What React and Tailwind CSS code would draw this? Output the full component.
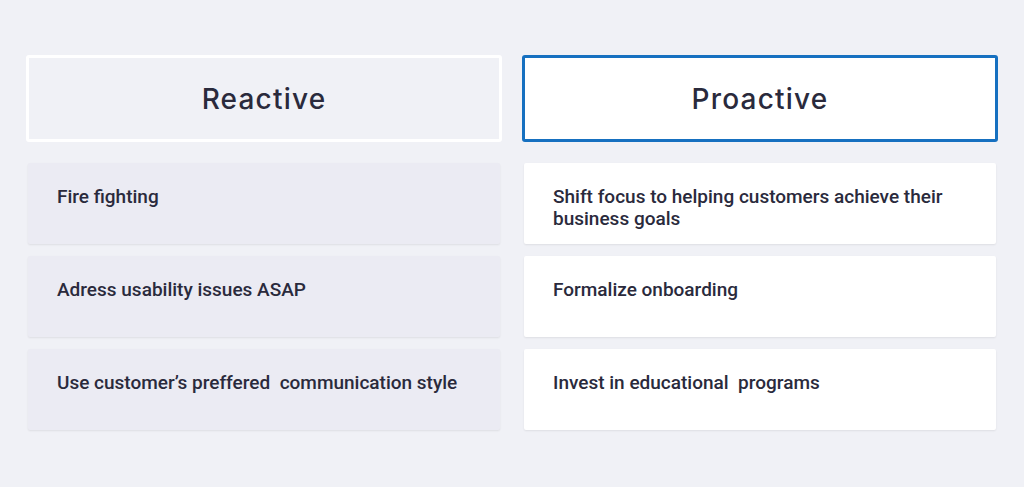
const columns = [
  {
    title: 'Reactive',
    active: false,
    items: [
      'Fire fighting',
      'Adress usability issues ASAP',
      'Use customer\u2019s preffered\u00a0 communication style',
    ],
  },
  {
    title: 'Proactive',
    active: true,
    items: [
      'Shift focus to helping customers achieve their business goals',
      'Formalize onboarding',
      'Invest in educational\u00a0 programs',
    ],
  },
];

export default function App() {
  return (
    <div className="w-[1024px] h-[487px] bg-[#f0f1f6] pt-[55px] px-[26px] flex gap-[20px] font-['Roboto',sans-serif] text-[#2a2a3c]">
      {columns.map((col) => (
        <div key={col.title} className="flex-1 flex flex-col">
          {/* Header */}
          <div
            className={`h-[87px] rounded-[3px] flex items-center justify-center ${
              col.active
                ? 'bg-white border-[3px] border-[#1670c0]'
                : 'bg-[#f0f1f6] border-[3px] border-white'
            }`}
          >
            <h2 className="text-[28px] font-medium tracking-[1.2px] font-['Inter',sans-serif] text-[#2a2a3c]">
              {col.title}
            </h2>
          </div>

          {/* Items */}
          <div className="mt-[21px] flex flex-col gap-[12px] px-[2px]">
            {col.items.map((item) => (
              <div
                key={item}
                className={`h-[81px] rounded-[2px] pl-[29px] pr-[40px] pt-[23px] shadow-[0_1px_2px_rgba(0,0,0,0.08)] ${
                  col.active ? 'bg-white' : 'bg-[#ebebf3]'
                }`}
              >
                <p className="text-[19px] leading-[22px] font-medium">{item}</p>
              </div>
            ))}
          </div>
        </div>
      ))}
    </div>
  );
}
